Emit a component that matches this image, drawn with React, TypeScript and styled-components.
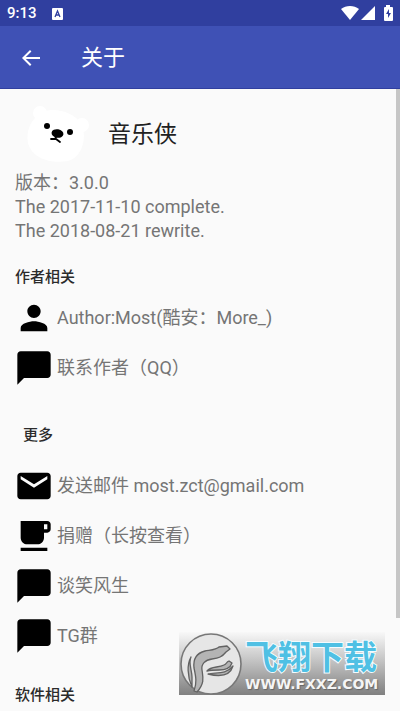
import React from "react";
import styled, { createGlobalStyle } from "styled-components";

const GlobalStyle = createGlobalStyle`
  * { box-sizing: border-box; }
  body { margin: 0; background: #fafafa; }
  body, button, a { font-family: Roboto, "Noto Sans CJK SC", sans-serif; }
`;

const Screen = styled.div`
  position: relative;
  height: 100vh;
  overflow: hidden;
  display: flex;
  flex-direction: column;
  background: #fafafa;
`;

const StatusBar = styled.div`
  flex: none;
  height: 26px;
  padding: 0 7px;
  display: flex;
  align-items: center;
  gap: 15px;
  background: #303f9f;
  color: #fff;
`;

const Clock = styled.span`
  font-size: 15px;
  line-height: 26px;
  font-weight: 500;
`;

const StatusIcons = styled.div`
  margin-left: auto;
  display: flex;
  align-items: center;
  gap: 2px;
`;

const Glyph = styled.svg`
  display: block;
  flex: none;
`;

const AppBar = styled.header`
  flex: none;
  height: 63px;
  padding: 2px 0 0 19px;
  display: flex;
  align-items: center;
  gap: 38px;
  background: #3f51b5;
  border-bottom: 1px solid #303f9f;
  color: #fff;
`;

const BackButton = styled.button`
  padding: 0;
  border: 0;
  background: none;
  color: inherit;
`;

const Title = styled.h1`
  margin: 0;
  font-size: 22px;
  line-height: 32px;
  font-weight: 400;
`;

const Content = styled.main`
  position: relative;
  flex: 1;
  min-height: 0;
  overflow: hidden;
`;

const ScrollThumb = styled.div`
  position: absolute;
  top: 0;
  right: 0;
  width: 4px;
  height: 85%;
  background: #c6c6c6;
`;

const Brand = styled.div`
  padding: 14px 15px 0 25px;
  display: flex;
  align-items: center;
  gap: 19px;
`;

const AppName = styled.h2`
  margin: 0;
  font-size: 23px;
  line-height: 34px;
  font-weight: 400;
  color: #212121;
`;

const Versions = styled.div`
  padding: 4px 15px 0;
  font-size: 18px;
  line-height: 24px;
  color: #757575;
`;

const Line = styled.p`
  margin: 0;
`;

const Section = styled.section<{ $gap: number }>`
  padding-top: ${(p) => p.$gap}px;
`;

const SectionTitle = styled.h3<{ $inset?: boolean }>`
  margin: 0 0 5px;
  padding-left: ${(p) => (p.$inset ? 23 : 15)}px;
  font-size: 15px;
  line-height: 22px;
  font-weight: 500;
  color: #2b2b2b;
`;

const List = styled.ul<{ $gap: number }>`
  margin: ${(p) => p.$gap}px 0 0;
  padding: 0;
  list-style: none;
`;

const RowLink = styled.a`
  height: 50px;
  padding-left: 14px;
  display: flex;
  align-items: center;
  gap: 3px;
  font-size: 18px;
  line-height: 26px;
  color: #757575;
  text-decoration: none;
  white-space: nowrap;
`;

const Watermark = styled.div`
  position: absolute;
  right: 15px;
  bottom: 16px;
  width: 206px;
  height: 63px;
  padding-left: 1px;
  display: flex;
  align-items: center;
  gap: 3px;
  background: linear-gradient(#f8f8f8, #cacaca 40%, #808080);
`;

const WatermarkText = styled.div`
  display: flex;
  flex-direction: column;
`;

const WatermarkName = styled.span`
  font: 700 33px/40px "Noto Sans CJK SC", sans-serif;
  color: #4fc0e4;
  -webkit-text-stroke: 2px #f4fcff;
  paint-order: stroke fill;
  white-space: nowrap;
`;

const WatermarkSite = styled.span`
  font: 700 14px/18px "DejaVu Sans", sans-serif;
  color: #f5f5f5;
  text-shadow: 1px 1px 1px #666;
`;

const paths = {
  person:
    "M12 12c2.21 0 4-1.79 4-4s-1.79-4-4-4-4 1.79-4 4 1.79 4 4 4zm0 2c-2.67 0-8 1.34-8 4v2h16v-2c0-2.66-5.33-4-8-4z",
  chat: "M20 2H4c-1.1 0-1.99.9-1.99 2L2 22l4-4h14c1.1 0 2-.9 2-2V4c0-1.1-.9-2-2-2z",
  mail: "M20 4H4c-1.1 0-1.99.9-1.99 2L2 18c0 1.1.9 2 2 2h16c1.1 0 2-.9 2-2V6c0-1.1-.9-2-2-2zm0 4l-8 5-8-5V6l8 5 8-5v2z",
  cup: "M20 3H4v10c0 2.21 1.79 4 4 4h6c2.21 0 4-1.79 4-4v-3h2c1.11 0 2-.9 2-2V5c0-1.11-.89-2-2-2zm0 5h-2V5h2v3zM4 19h16v2H4z",
};

type RowProps = { icon: keyof typeof paths; label: string; href?: string };

function Row({ icon, label, href = "#" }: RowProps) {
  return (
    <li>
      <RowLink href={href}>
        <Glyph width="40" height="40" viewBox="0 0 24 24" fill="#000" aria-hidden="true">
          <path d={paths[icon]} />
        </Glyph>
        {label}
      </RowLink>
    </li>
  );
}

function BearLogo() {
  return (
    <Glyph width="64" height="64" viewBox="0 0 64 64" aria-hidden="true">
      <g fill="#fff">
        <circle cx="15" cy="10" r="7" />
        <circle cx="57" cy="22" r="7" />
        <path d="M12 13C20 3 47 5 57 22C62 36 57 54 43 58C27 61 7 56 3 40C1 29 5 19 12 13Z" />
      </g>
      <circle cx="22" cy="23" r="3" />
      <circle cx="45" cy="29" r="3" />
      <ellipse cx="32.500" cy="30.500" rx="6" ry="4.200" transform="rotate(10 32.500 30.500)" />
      <path d="M31 34l-1 2M26 36l5 0 4 3" fill="none" stroke="#000" strokeWidth="1.800" strokeLinecap="round" />
    </Glyph>
  );
}

function PhoenixLogo() {
  return (
    <Glyph width="62" height="62" viewBox="0 0 62 62" aria-hidden="true">
      <circle cx="31" cy="31" r="30" fill="#e6e6e6" stroke="#777" strokeWidth="1.600" />
      <g fill="#b4b4b4" stroke="#626262" strokeWidth="1.300" strokeLinejoin="round">
        <path d="M17 59C25 50 23 44 22 37C21 31 25 27 32 26C39 25 42 24 46 19L50 16L47 13L39 14C36 17 30 17 25 18C17 20 13 26 14 35C16 44 17 50 14 58Z" />
        <path d="M11 24C8 30 12 37 12 44L12 54C7 43 7 31 11 24Z" />
        <path d="M27 38C31 33 38 35 44 32C47 31 46 29 49 28L52 30C50 36 45 37 39 37C34 37 31 37 27 38Z" />
        <path d="M28 41C35 39 46 42 53 33C50 43 40 44 28 41Z" />
      </g>
    </Glyph>
  );
}

export default function App() {
  return (
    <Screen>
      <GlobalStyle />
      <StatusBar>
        <Clock>9:13</Clock>
        <Glyph width="11" height="13" viewBox="0 0 11 13" aria-hidden="true">
          <rect y="1" width="11" height="12" rx="1" fill="#fff" />
          <path d="M3 10L5.500 4L8 10M4 8h3" fill="none" stroke="#303f9f" strokeWidth="1.300" />
        </Glyph>
        <StatusIcons>
          <Glyph width="18" height="16" viewBox="0 0 18 16" fill="#fff" aria-hidden="true">
            <path d="M0 4C5 0 13 0 18 4L9 15Z" />
          </Glyph>
          <Glyph width="14" height="14" viewBox="0 0 14 14" fill="#fff" aria-hidden="true">
            <path d="M14 0V14H0Z" />
          </Glyph>
          <Glyph width="16" height="16" viewBox="0 0 16 16" aria-hidden="true">
            <path d="M9 0h4v2h2q1 0 1 1v12q0 1-1 1H8q-1 0-1-1V3q0-1 1-1h1z" fill="#fff" />
            <path d="M12 4L9 9h2v4l3-5h-2z" fill="#303f9f" />
          </Glyph>
        </StatusIcons>
      </StatusBar>
      <AppBar>
        <BackButton type="button" aria-label="返回">
          <Glyph width="24" height="24" viewBox="0 0 24 24" fill="currentColor" aria-hidden="true">
            <path d="M21 11H6.830l5.590-5.590L11 4l-8 8 8 8 1.410-1.410L6.830 13H21z" />
          </Glyph>
        </BackButton>
        <Title>关于</Title>
      </AppBar>
      <Content>
        <Brand>
          <BearLogo />
          <AppName>音乐侠</AppName>
        </Brand>
        <Versions>
          <Line>版本：3.0.0</Line>
          <Line>The 2017-11-10 complete.</Line>
          <Line>The 2018-08-21 rewrite.</Line>
        </Versions>
        <Section $gap={23}>
          <SectionTitle>作者相关</SectionTitle>
          <List $gap={0}>
            <Row icon="person" label="Author:Most(酷安：More_)" />
            <Row icon="chat" label="联系作者（QQ）" />
          </List>
        </Section>
        <Section $gap={31}>
          <SectionTitle $inset>更多</SectionTitle>
          <List $gap={15}>
            <Row icon="mail" label="发送邮件 most.zct@gmail.com" href="mailto:most.zct@gmail.com" />
            <Row icon="cup" label="捐赠（长按查看）" />
            <Row icon="chat" label="谈笑风生" />
            <Row icon="chat" label="TG群" />
          </List>
        </Section>
        <Section $gap={23}>
          <SectionTitle>软件相关</SectionTitle>
        </Section>
        <ScrollThumb />
      </Content>
      <Watermark>
        <PhoenixLogo />
        <WatermarkText>
          <WatermarkName>飞翔下载</WatermarkName>
          <WatermarkSite>WWW.FXXZ.COM</WatermarkSite>
        </WatermarkText>
      </Watermark>
    </Screen>
  );
}
